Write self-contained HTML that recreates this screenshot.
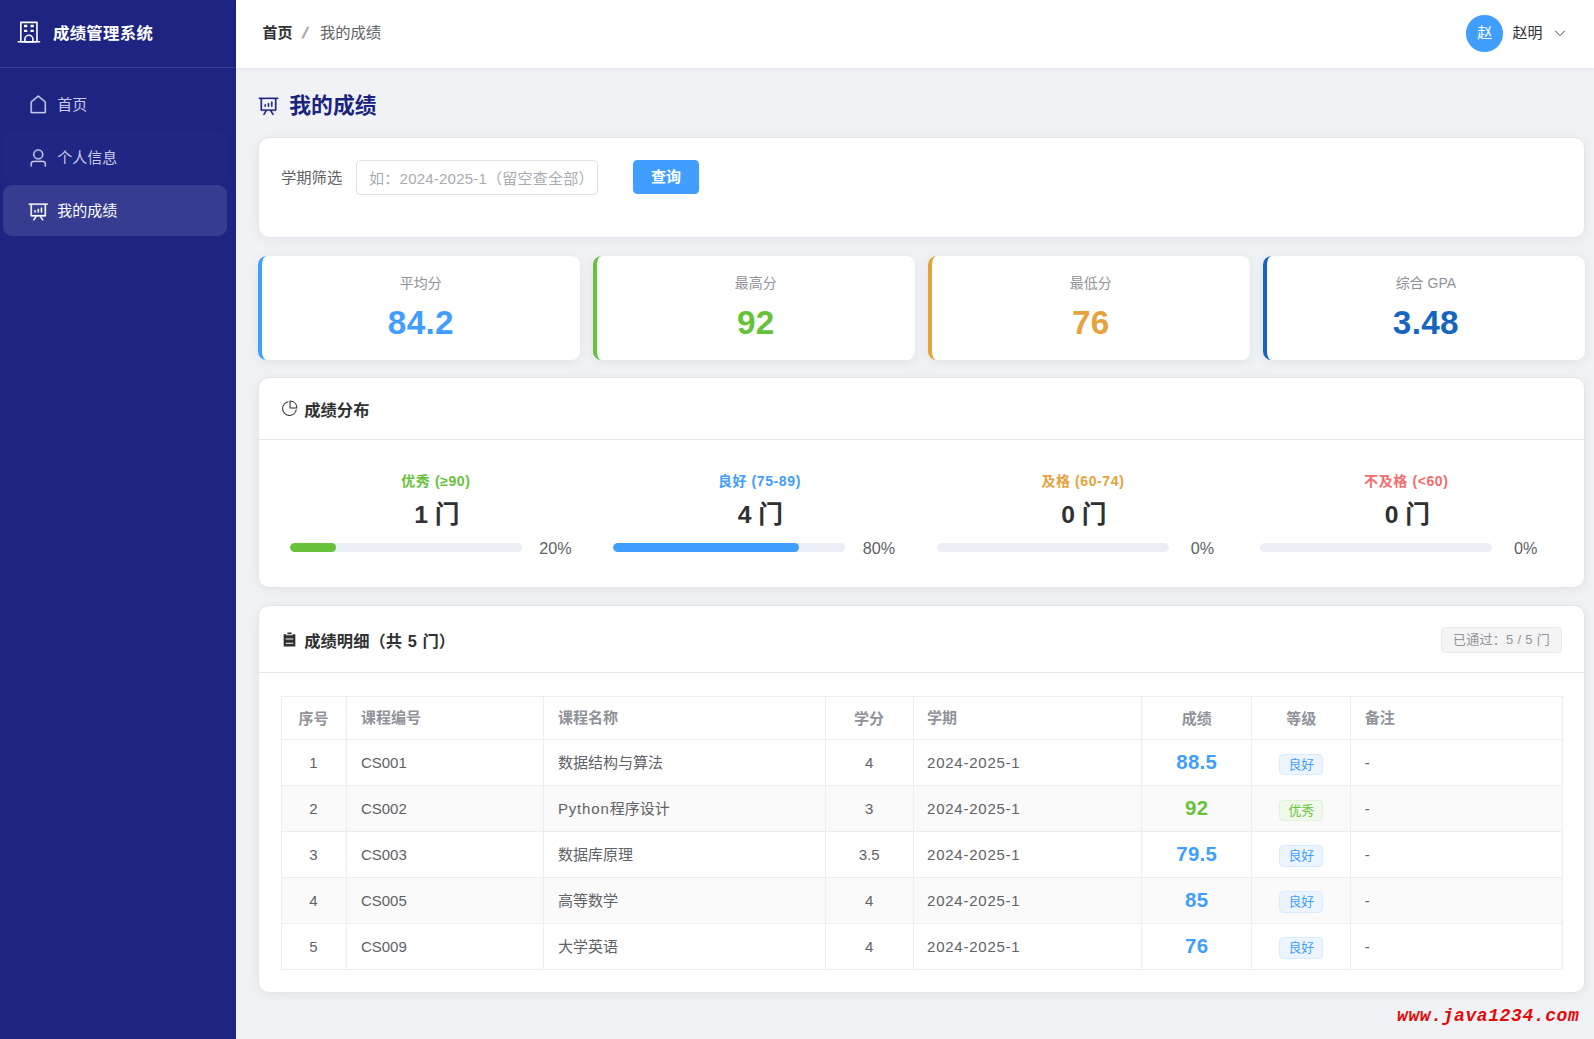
<!DOCTYPE html>
<html lang="zh-CN">
<head>
<meta charset="utf-8">
<title>成绩管理系统 - 我的成绩</title>
<style>
*{box-sizing:border-box;margin:0;padding:0}
html,body{width:1594px;height:1039px;overflow:hidden}
body{font-family:"Liberation Sans","Noto Sans CJK SC",sans-serif;font-size:15px;line-height:1;color:#303133;background:#f0f2f5;position:relative;-webkit-font-smoothing:antialiased}
svg{display:block}
/* sidebar */
.aside{position:absolute;left:0;top:0;width:236px;height:1039px;background:#1d2482;color:#c5cae9}
.logo{height:68px;border-bottom:1px solid rgba(255,255,255,.12);display:flex;align-items:center;padding-left:16px;color:#fff}
.logo svg{width:25.8px;height:25.8px;margin-top:-1.5px}
.logo span{font-size:16.4px;font-weight:700;margin-left:11.2px;letter-spacing:.3px;position:relative;top:0px}
.menu{padding-top:10.5px}
.mi{height:51px;margin:0 0 2.25px 3px;width:224px;border-radius:9px;display:flex;align-items:center;padding-left:24.6px;font-size:15px;color:#c5cae9}
.mi svg{width:20.5px;height:20.5px;margin-right:9.2px;position:relative;top:.5px}
.mi svg path,.ptitle svg path{stroke:currentColor;stroke-width:14}
.mi.hov{background:rgba(255,255,255,.012)}
.mi.act{background:rgba(255,255,255,.115);color:#fff}
/* header */
.header{position:absolute;left:236px;top:0;width:1358px;height:68px;background:#fff;box-shadow:0 1px 4px rgba(0,21,41,.08);display:flex;align-items:center}
.bc{position:absolute;left:27px;top:0;height:66px;display:flex;align-items:center;font-size:15px}
.bc b{color:#303133;font-weight:700;position:relative;top:-.6px;left:-.5px}
.bc i{font-style:normal;color:#a6a9b0;font-weight:700;margin:0 12.2px 0 10.4px;font-size:15.5px;transform:skewX(-14deg) scaleX(1.25);position:relative;top:-.3px}
.bc span{color:#606266;font-size:15.3px}
.user{position:absolute;right:27.5px;top:15px;height:37px;display:flex;align-items:center}
.avatar{width:37.5px;height:36.6px;padding-bottom:1.6px;border-radius:50%;background:#409eff;color:#fff;font-size:15px;display:flex;align-items:center;justify-content:center}
.user .nm{margin-left:9px;font-size:15px;color:#303133;position:relative;top:-1px}
.user svg{width:14px;height:14px;margin-left:10px;color:#50535a;position:relative;top:-.4px}
/* main */
.main{position:absolute;left:236px;top:68px;width:1358px;height:971px}
.ptitle{position:absolute;left:22.3px;top:22.4px;height:32px;display:flex;align-items:center;color:#1a237e;font-size:21.8px;font-weight:700}
.ptitle svg{width:21px;height:21px;margin-right:10px;position:relative;top:-1.3px;left:-.6px}
.card{position:absolute;left:21.6px;width:1327.4px;background:#fff;border:1px solid #e2e5ea;border-radius:10.75px;box-shadow:0 2px 12px rgba(0,0,0,.06)}

/* filter card */
.c1{top:68.9px;height:101.1px}
.flabel{position:absolute;left:22.4px;top:23.1px;height:34.5px;line-height:34.5px;font-size:15.3px;color:#606266}
.finput{position:absolute;left:97.8px;top:22.2px;width:241.5px;height:34.5px;border:1px solid #dcdfe6;border-radius:4.3px;line-height:35.2px;padding-left:11.7px;font-size:15.05px;letter-spacing:.2px;color:#a8abb2;white-space:nowrap;overflow:hidden}
.fbtn{position:absolute;left:374.2px;top:22.1px;width:66.5px;height:34.5px;border-radius:4.3px;background:#409eff;color:#fff;font-size:15px;font-weight:700;text-align:center;line-height:33.5px}
/* stats */
.stat{position:absolute;top:187.7px;width:322.3px;height:104.4px;background:#fff;border-radius:8.6px;border-left:4.3px solid #409eff;box-shadow:0 2px 12px rgba(0,0,0,.07);text-align:center}
.stat .l{position:absolute;left:0;right:0;top:16px;font-size:14px;color:#909399;line-height:22px}
.stat .v{position:absolute;left:0;right:0;top:45px;font-size:33.3px;letter-spacing:.3px;font-weight:700;line-height:44px}

/* card header */
.ch{position:absolute;left:0;right:0;top:0;border-bottom:1px solid #e4e7ed;display:flex;align-items:center;padding-left:22.1px;padding-top:3.2px;font-size:16.3px;word-spacing:1.2px;font-weight:700;color:#303133}
.ch svg{width:17px;height:17px;margin-right:6.6px;color:#303133;position:relative;top:-.9px}
/* distribution */
.c2{top:308.7px;height:211.3px}
.c2 .ch{height:62.2px}
.dcol{position:absolute;top:93px;width:292px;text-align:center}
.dcol .dl{font-size:14px;font-weight:700;line-height:22px;letter-spacing:.6px;position:relative;top:-.8px}
.dcol .dn{font-size:24.7px;font-weight:700;color:#303133;line-height:34px;margin-top:5.5px;padding-left:2px}
.dcol .bar{position:absolute;left:0;top:72.6px;width:232px;height:8.6px;border-radius:5px;background:#ebeef5;overflow:hidden}
.dcol .bar i{display:block;height:100%;border-radius:5px}
.dcol .pt{position:absolute;left:238px;width:55px;top:66.4px;font-size:16.2px;color:#606266;line-height:22px;text-align:center}
/* detail */
.c3{top:537.1px;height:388.1px}
.c3 .ch{height:67px}
.tag{display:inline-block;border:1px solid;border-radius:4.3px;white-space:nowrap}
.tag.info{position:absolute;right:22.4px;top:21px;height:25.7px;line-height:23.5px;padding:0 10.5px;letter-spacing:.3px;word-spacing:0;font-size:13px;font-weight:400;color:#909399;background:#f4f4f5;border-color:#e9e9eb}
table{position:absolute;left:22.5px;top:90px;border-collapse:collapse;table-layout:fixed;width:1280.5px;font-size:15px;color:#606266}
td,th{border:1px solid #eceef2;padding:0 13.5px;text-align:left;font-weight:400;white-space:nowrap;overflow:hidden}
th{height:43.4px;color:#909399;font-weight:700;padding-bottom:1.6px}
td{height:45.9px}
tr.s td{background:#fafafa}
.c{text-align:center;padding:0}
.tm{letter-spacing:.75px}
.lt{letter-spacing:.85px}
tr>:first-child{padding-right:1.6px}
.sc{font-size:20.4px;font-weight:700;color:#409eff;letter-spacing:.3px;position:relative;top:-.6px}
.tag.sm{height:21.5px;line-height:19.5px;padding:0 8.2px;font-size:12.9px;position:relative;top:1.5px}
.tag.p{color:#409eff;background:#ecf5ff;border-color:#d9ecff}
.tag.g{color:#67c23a;background:#f0f9eb;border-color:#e1f3d8}
.wm{position:absolute;left:1397px;top:1001.5px;font-family:"Liberation Mono",monospace;font-style:italic;font-weight:700;font-size:18px;color:#e30a0a;letter-spacing:.6px;line-height:28px}
</style>
</head>
<body>
<div class="aside">
  <div class="logo">
    <svg viewBox="0 0 1024 1024"><path fill="currentColor" d="M224 128v704h576V128zm-32-64h640a32 32 0 0 1 32 32v768a32 32 0 0 1-32 32H192a32 32 0 0 1-32-32V96a32 32 0 0 1 32-32"/><path fill="currentColor" d="M64 832h896v64H64zm256-640h128v96H320z"/><path fill="currentColor" d="M384 832h256v-64a128 128 0 1 0-256 0zm128-256a192 192 0 0 1 192 192v128H320V768a192 192 0 0 1 192-192M320 384h128v96H320zm256-192h128v96H576zm0 192h128v96H576z"/></svg>
    <span>成绩管理系统</span>
  </div>
  <div class="menu">
    <div class="mi"><svg viewBox="0 0 1024 1024"><path fill="currentColor" d="M192 413.952V896h640V413.952L512 147.328zM139.520 374.400l352-293.312a32 32 0 0 1 40.960 0l352 293.312A32 32 0 0 1 896 398.976V928a32 32 0 0 1-32 32H160a32 32 0 0 1-32-32V398.976a32 32 0 0 1 11.520-24.576"/></svg>首页</div>
    <div class="mi hov"><svg viewBox="0 0 1024 1024"><path fill="currentColor" d="M512 512a192 192 0 1 0 0-384 192 192 0 0 0 0 384m0 64a256 256 0 1 1 0-512 256 256 0 0 1 0 512m320 320v-96a96 96 0 0 0-96-96H288a96 96 0 0 0-96 96v96a32 32 0 1 1-64 0v-96a160 160 0 0 1 160-160h448a160 160 0 0 1 160 160v96a32 32 0 1 1-64 0"/></svg>个人信息</div>
    <div class="mi act"><svg viewBox="0 0 1024 1024"><path fill="currentColor" d="m665.216 768 110.848 192h-73.856L591.360 768H433.024L322.176 960H248.320l110.848-192H160a32 32 0 0 1-32-32V192H64a32 32 0 0 1 0-64h896a32 32 0 1 1 0 64h-64v544a32 32 0 0 1-32 32zM832 192H192v512h640zM352 448a32 32 0 0 1 32 32v64a32 32 0 0 1-64 0v-64a32 32 0 0 1 32-32m160-64a32 32 0 0 1 32 32v128a32 32 0 0 1-64 0V416a32 32 0 0 1 32-32m160-64a32 32 0 0 1 32 32v192a32 32 0 1 1-64 0V352a32 32 0 0 1 32-32"/></svg>我的成绩</div>
  </div>
</div>

<div class="header">
  <div class="bc"><b>首页</b><i>/</i><span>我的成绩</span></div>
  <div class="user">
    <div class="avatar">赵</div><span class="nm">赵明</span>
    <svg viewBox="0 0 1024 1024"><path fill="currentColor" d="M831.872 340.864 512 652.672 192.128 340.864a30.592 30.592 0 0 0-42.752 0 29.120 29.120 0 0 0 0 41.600L489.664 714.240a32 32 0 0 0 44.672 0l340.288-331.712a29.120 29.120 0 0 0 0-41.728 30.592 30.592 0 0 0-42.752 0z"/></svg>
  </div>
</div>

<div class="main">
  <div class="ptitle"><svg viewBox="0 0 1024 1024"><path fill="currentColor" d="m665.216 768 110.848 192h-73.856L591.360 768H433.024L322.176 960H248.320l110.848-192H160a32 32 0 0 1-32-32V192H64a32 32 0 0 1 0-64h896a32 32 0 1 1 0 64h-64v544a32 32 0 0 1-32 32zM832 192H192v512h640zM352 448a32 32 0 0 1 32 32v64a32 32 0 0 1-64 0v-64a32 32 0 0 1 32-32m160-64a32 32 0 0 1 32 32v128a32 32 0 0 1-64 0V416a32 32 0 0 1 32-32m160-64a32 32 0 0 1 32 32v192a32 32 0 1 1-64 0V352a32 32 0 0 1 32-32"/></svg>我的成绩</div>

  <div class="card c1">
    <div class="flabel">学期筛选</div>
    <div class="finput">如：2024-2025-1（留空查全部）</div>
    <div class="fbtn">查询</div>
  </div>
  <div class="stat" style="left:21.7px;border-left-color:#409eff"><div class="l">平均分</div><div class="v" style="color:#409eff">84.2</div></div>
  <div class="stat" style="left:356.7px;border-left-color:#67c23a"><div class="l">最高分</div><div class="v" style="color:#67c23a">92</div></div>
  <div class="stat" style="left:691.7px;border-left-color:#e6a23c"><div class="l">最低分</div><div class="v" style="color:#e6a23c">76</div></div>
  <div class="stat" style="left:1026.7px;border-left-color:#1565c0"><div class="l">综合 GPA</div><div class="v" style="color:#1565c0">3.48</div></div>

  <div class="card c2">
    <div class="ch"><svg viewBox="0 0 1024 1024"><path fill="currentColor" d="M448 68.480v64.832A384.128 384.128 0 0 0 512 896a384.128 384.128 0 0 0 378.688-320h64.768A448.128 448.128 0 0 1 64 512 448.128 448.128 0 0 1 448 68.480"/><path fill="currentColor" d="M576 97.280V448h350.720A384.064 384.064 0 0 0 576 97.280M512 64V33.152A448 448 0 0 1 990.848 512H512z"/></svg>成绩分布</div>
    <div class="dcol" style="left:31.3px"><div class="dl" style="color:#67c23a">优秀 (≥90)</div><div class="dn">1 门</div><div class="bar"><i style="width:20%;background:#67c23a"></i></div><div class="pt">20%</div></div>
    <div class="dcol" style="left:354.8px"><div class="dl" style="color:#409eff">良好 (75-89)</div><div class="dn">4 门</div><div class="bar"><i style="width:80%;background:#409eff"></i></div><div class="pt">80%</div></div>
    <div class="dcol" style="left:678.3px"><div class="dl" style="color:#e6a23c">及格 (60-74)</div><div class="dn">0 门</div><div class="bar"><i style="width:0%;background:#e6a23c"></i></div><div class="pt">0%</div></div>
    <div class="dcol" style="left:1001.7px"><div class="dl" style="color:#f56c6c">不及格 (&lt;60)</div><div class="dn">0 门</div><div class="bar"><i style="width:0%;background:#f56c6c"></i></div><div class="pt">0%</div></div>
  </div>
  <div class="card c3">
    <div class="ch"><svg viewBox="0 0 1024 1024"><path fill="currentColor" d="M704 192h160v736H160V192h160v64h384zM288 512h448v-64H288zm0 256h448v-64H288zm96-576V96h256v96z"/></svg>成绩明细（共 5 门）<span class="tag info">已通过：5 / 5 门</span></div>
    <table>
      <colgroup><col style="width:65.3px"><col style="width:197px"><col style="width:281.2px"><col style="width:88px"><col style="width:228.5px"><col style="width:110.3px"><col style="width:98.9px"><col style="width:211.3px"></colgroup>
      <tr><th class="c">序号</th><th>课程编号</th><th>课程名称</th><th class="c">学分</th><th>学期</th><th class="c">成绩</th><th class="c">等级</th><th>备注</th></tr>
      <tr><td class="c">1</td><td>CS001</td><td>数据结构与算法</td><td class="c">4</td><td class="tm">2024-2025-1</td><td class="c"><span class="sc" style="color:#409eff">88.5</span></td><td class="c"><span class="tag sm p">良好</span></td><td>-</td></tr>
      <tr class="s"><td class="c">2</td><td>CS002</td><td><span class="lt">Python</span>程序设计</td><td class="c">3</td><td class="tm">2024-2025-1</td><td class="c"><span class="sc" style="color:#67c23a">92</span></td><td class="c"><span class="tag sm g">优秀</span></td><td>-</td></tr>
      <tr><td class="c">3</td><td>CS003</td><td>数据库原理</td><td class="c">3.5</td><td class="tm">2024-2025-1</td><td class="c"><span class="sc" style="color:#409eff">79.5</span></td><td class="c"><span class="tag sm p">良好</span></td><td>-</td></tr>
      <tr class="s"><td class="c">4</td><td>CS005</td><td>高等数学</td><td class="c">4</td><td class="tm">2024-2025-1</td><td class="c"><span class="sc" style="color:#409eff">85</span></td><td class="c"><span class="tag sm p">良好</span></td><td>-</td></tr>
      <tr><td class="c">5</td><td>CS009</td><td>大学英语</td><td class="c">4</td><td class="tm">2024-2025-1</td><td class="c"><span class="sc" style="color:#409eff">76</span></td><td class="c"><span class="tag sm p">良好</span></td><td>-</td></tr>
    </table>
  </div>


</div>
<div class="wm">www.java1234.com</div>
</body>
</html>
